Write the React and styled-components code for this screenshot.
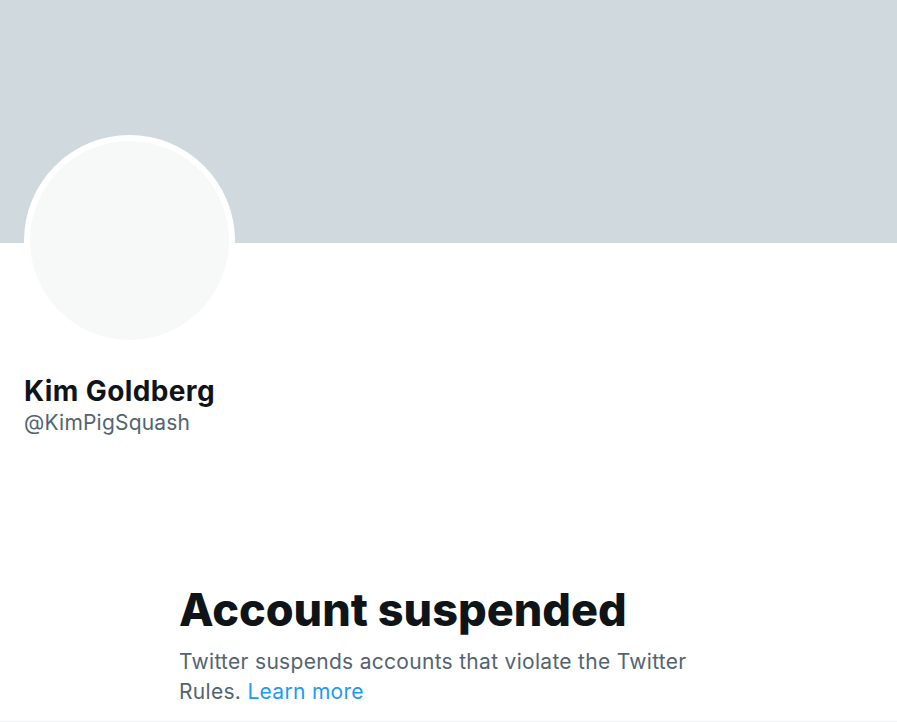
import React from 'react'
import styled, { createGlobalStyle } from 'styled-components'

const GlobalStyle = createGlobalStyle`
  html, body {
    margin: 0;
    padding: 0;
    background: #ffffff;
  }
  body {
    font-family: Inter, "Liberation Sans", Arial, sans-serif;
    color: #0f1419;
  }
`

function App() {
  return (
    <Page>
      <GlobalStyle />
      <Banner />
      <ProfileHead>
        <Avatar>
          <AvatarInner />
        </Avatar>
        <Name>Kim Goldberg</Name>
        <Handle>@KimPigSquash</Handle>
      </ProfileHead>
      <EmptyState>
        <Title>Account suspended</Title>
        <Message>
          Twitter suspends accounts that violate the Twitter Rules.{' '}
          <LearnMore href="#">Learn more</LearnMore>
        </Message>
      </EmptyState>
    </Page>
  )
}

export default App

const Page = styled.div`
  width: 897px;
  height: 722px;
  border-bottom: 1px solid #eff3f4;
  box-sizing: border-box;
  overflow: hidden;
`

const Banner = styled.div`
  height: 243px;
  background: #cfd9de;
`

const ProfileHead = styled.div`
  display: flex;
  flex-direction: column;
  align-items: flex-start;
  padding: 0 24px;
`

const Avatar = styled.div`
  width: 211px;
  height: 211px;
  margin-top: -108px;
  border-radius: 50%;
  background: #ffffff;
  display: flex;
  align-items: center;
  justify-content: center;
`

const AvatarInner = styled.div`
  width: 199px;
  height: 199px;
  border-radius: 50%;
  background: #f7f9f9;
`

const Name = styled.div`
  margin-top: 27px;
  font-size: 28px;
  font-weight: 700;
  line-height: 36px;
  letter-spacing: 0.4px;
  color: #0f1419;
`

const Handle = styled.div`
  margin-top: 1px;
  font-size: 21px;
  line-height: 26px;
  letter-spacing: 0.2px;
  color: #536471;
`

const EmptyState = styled.div`
  margin-top: 147px;
  margin-left: 179px;
  width: 540px;
`

const Title = styled.h1`
  margin: 0;
  font-size: 45px;
  font-weight: 800;
  line-height: 54px;
  letter-spacing: 0;
  color: #0f1419;
`

const Message = styled.p`
  margin: 10px 0 0;
  font-size: 21px;
  line-height: 30px;
  letter-spacing: 0.3px;
  color: #536471;
`

const LearnMore = styled.a`
  color: #1d9bf0;
  text-decoration: none;
`
